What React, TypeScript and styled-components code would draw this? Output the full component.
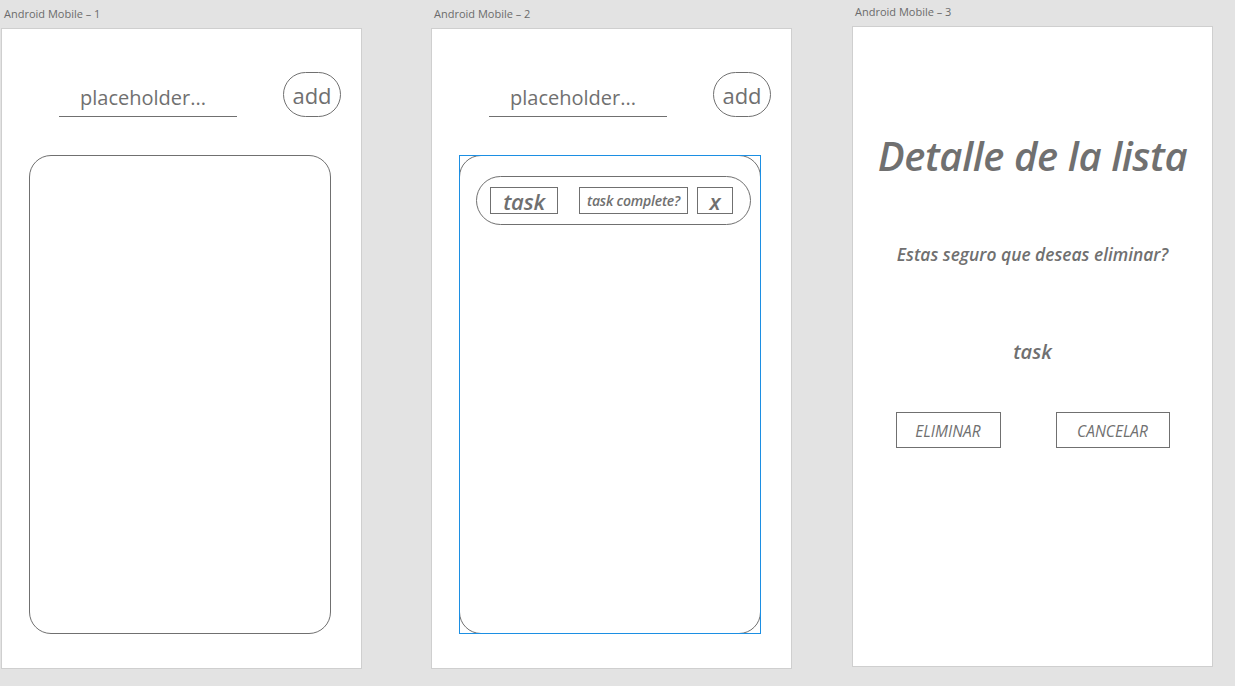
import styled, { createGlobalStyle } from "styled-components";

const GlobalStyle = createGlobalStyle`
  html, body {
    margin: 0;
    padding: 0;
    background: #e3e3e3;
    font-family: "Open Sans", "Liberation Sans", sans-serif;
  }
`;

const Canvas = styled.div`
  display: flex;
  align-items: flex-start;
  padding-left: 1px;
  height: 686px;
  overflow: hidden;
`;

const Frame = styled.section<{ $offset: number; $top: number }>`
  display: flex;
  flex-direction: column;
  margin-left: ${(props) => props.$offset}px;
  padding-top: ${(props) => props.$top}px;
`;

const FrameLabel = styled.div`
  font-size: 11px;
  line-height: 15px;
  color: #6b6b6b;
  padding-left: 3px;
  margin-bottom: 7px;
`;

const Board = styled.div`
  box-sizing: border-box;
  width: 361px;
  height: 641px;
  background: #ffffff;
  border: 1px solid #cfcfcf;
  display: flex;
  flex-direction: column;
`;

const InputRow = styled.div`
  display: flex;
  align-items: flex-end;
  margin: 43px 0 0 57px;
  gap: 46px;
`;

const TextInput = styled.input`
  box-sizing: border-box;
  width: 178px;
  height: 45px;
  border: none;
  border-bottom: 1px solid #707070;
  outline: none;
  background: transparent;
  padding: 6px 0 0 21px;
  font-family: "Open Sans", sans-serif;
  font-size: 20px;
  color: #707070;
  &::placeholder {
    color: #707070;
  }
`;

const AddButton = styled.button`
  box-sizing: border-box;
  width: 58px;
  height: 45px;
  border: 1px solid #707070;
  border-radius: 23px;
  background: #ffffff;
  font-family: "Open Sans", sans-serif;
  font-size: 22px;
  color: #707070;
  padding: 1px 0 0;
  line-height: 1;
`;

const ListPanel = styled.div<{ $selected?: boolean }>`
  position: relative;
  box-sizing: border-box;
  width: 302px;
  height: 479px;
  margin: 38px 0 0 27px;
  border: 1px solid #707070;
  border-radius: 22px;
  padding: 20px 10px 0 16px;
  ${(props) =>
    props.$selected &&
    `
    &::after {
      content: "";
      position: absolute;
      inset: -1px;
      border: 1px solid #1c8fe3;
      pointer-events: none;
    }
  `}
`;

const TaskRow = styled.div`
  box-sizing: border-box;
  width: 275px;
  height: 49px;
  border: 1px solid #707070;
  border-radius: 25px;
  display: flex;
  align-items: center;
  padding-left: 13px;
`;

const TaskBox = styled.div<{ $width: number; $size: number; $gap: number }>`
  box-sizing: border-box;
  width: ${(props) => props.$width}px;
  height: 27px;
  margin-right: ${(props) => props.$gap}px;
  border: 1px solid #707070;
  display: flex;
  align-items: center;
  justify-content: center;
  font-size: ${(props) => props.$size}px;
  font-style: italic;
  font-weight: 600;
  color: #707070;
  white-space: nowrap;
  letter-spacing: -0.2px;
`;

const DetailBody = styled.div`
  display: flex;
  flex-direction: column;
  align-items: center;
  color: #707070;
  font-style: italic;
`;

const Title = styled.h1`
  margin: 105px 0 0;
  font-size: 40px;
  line-height: 48px;
  font-weight: 600;
  letter-spacing: -0.4px;
`;

const Question = styled.p`
  margin: 62px 0 0;
  font-size: 17.4px;
  line-height: 24px;
  font-weight: 600;
`;

const TaskName = styled.p`
  margin: 72px 0 0;
  font-size: 20px;
  line-height: 27px;
  font-weight: 600;
`;

const ButtonRow = styled.div`
  display: flex;
  gap: 55px;
  margin-top: 47px;
`;

const OutlineButton = styled.button<{ $width: number }>`
  box-sizing: border-box;
  width: ${(props) => props.$width}px;
  height: 36px;
  border: 1px solid #707070;
  background: #ffffff;
  font-family: "Open Sans", sans-serif;
  font-style: italic;
  font-size: 15.5px;
  color: #707070;
  padding: 1px 0 0;
`;

function InputHeader() {
  return (
    <InputRow>
      <TextInput placeholder="placeholder..." />
      <AddButton>add</AddButton>
    </InputRow>
  );
}

export default function App() {
  return (
    <>
      <GlobalStyle />
      <Canvas>
        <Frame $offset={0} $top={6}>
          <FrameLabel>Android Mobile – 1</FrameLabel>
          <Board>
            <InputHeader />
            <ListPanel />
          </Board>
        </Frame>

        <Frame $offset={69} $top={6}>
          <FrameLabel>Android Mobile – 2</FrameLabel>
          <Board>
            <InputHeader />
            <ListPanel $selected>
              <TaskRow>
                <TaskBox $width={68} $size={22} $gap={21}>task</TaskBox>
                <TaskBox $width={109} $size={14} $gap={9}>task complete?</TaskBox>
                <TaskBox $width={36} $size={22} $gap={0}>x</TaskBox>
              </TaskRow>
            </ListPanel>
          </Board>
        </Frame>

        <Frame $offset={60} $top={4}>
          <FrameLabel>Android Mobile – 3</FrameLabel>
          <Board>
            <DetailBody>
              <Title>Detalle de la lista</Title>
              <Question>Estas seguro que deseas eliminar?</Question>
              <TaskName>task</TaskName>
              <ButtonRow>
                <OutlineButton $width={105}>ELIMINAR</OutlineButton>
                <OutlineButton $width={114}>CANCELAR</OutlineButton>
              </ButtonRow>
            </DetailBody>
          </Board>
        </Frame>
      </Canvas>
    </>
  );
}
